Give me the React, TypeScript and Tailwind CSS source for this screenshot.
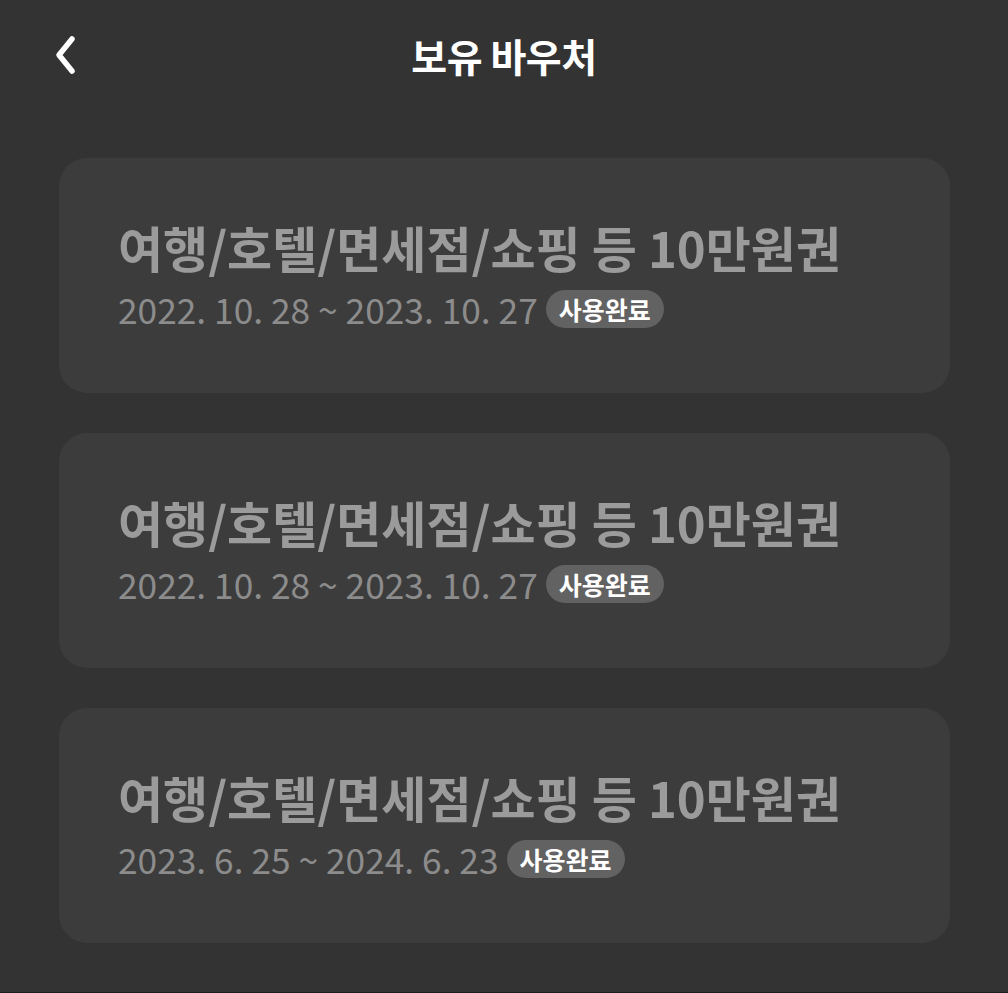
import React from "react";

const vouchers = [
  { title: "여행/호텔/면세점/쇼핑 등 10만원권", period: "2022. 10. 28 ~ 2023. 10. 27", status: "사용완료" },
  { title: "여행/호텔/면세점/쇼핑 등 10만원권", period: "2022. 10. 28 ~ 2023. 10. 27", status: "사용완료" },
  { title: "여행/호텔/면세점/쇼핑 등 10만원권", period: "2023. 6. 25 ~ 2024. 6. 23", status: "사용완료" },
];

const BackIcon = () => (
  <svg width="30" height="44" viewBox="0 0 30 44" fill="none">
    <path d="M21 6 L8 22 L21 38" stroke="#ffffff" strokeWidth="5.5" strokeLinecap="round" strokeLinejoin="round" />
  </svg>
);

export default function App() {
  return (
    <div
      className="w-full h-[993px] bg-[#333333] flex flex-col border-b border-[#1e1e1e]"
      style={{ fontFamily: '"Noto Sans CJK KR", "Noto Sans", sans-serif' }}
    >
      <header className="relative h-[118px] flex items-start justify-center pt-[29px]">
        <button className="absolute left-[51px] top-[33px] p-0 bg-transparent">
          <BackIcon />
        </button>
        <h1 className="text-white text-[39px] font-bold leading-[52px] tracking-[-0.5px]">보유 바우처</h1>
      </header>

      <main className="flex flex-col gap-10 pt-10 pl-[59px] pr-[58px]">
        {vouchers.map((v, i) => (
          <div key={i} className="h-[235px] rounded-[28px] bg-[#3c3c3c] flex flex-col justify-center px-[59px]">
            <p className="text-[#9b9b9b] text-[49px] font-bold leading-[60px] -mt-[2px]">{v.title}</p>
            <div className="flex items-center gap-[8px] mt-[9px]">
              <span className="text-[#8c8c8c] text-[35.3px] leading-[46px]">{v.period}</span>
              <span className="rounded-full bg-[#626262] text-white text-[25px] font-bold leading-[38px] px-[13px]">
                {v.status}
              </span>
            </div>
          </div>
        ))}
      </main>
    </div>
  );
}
